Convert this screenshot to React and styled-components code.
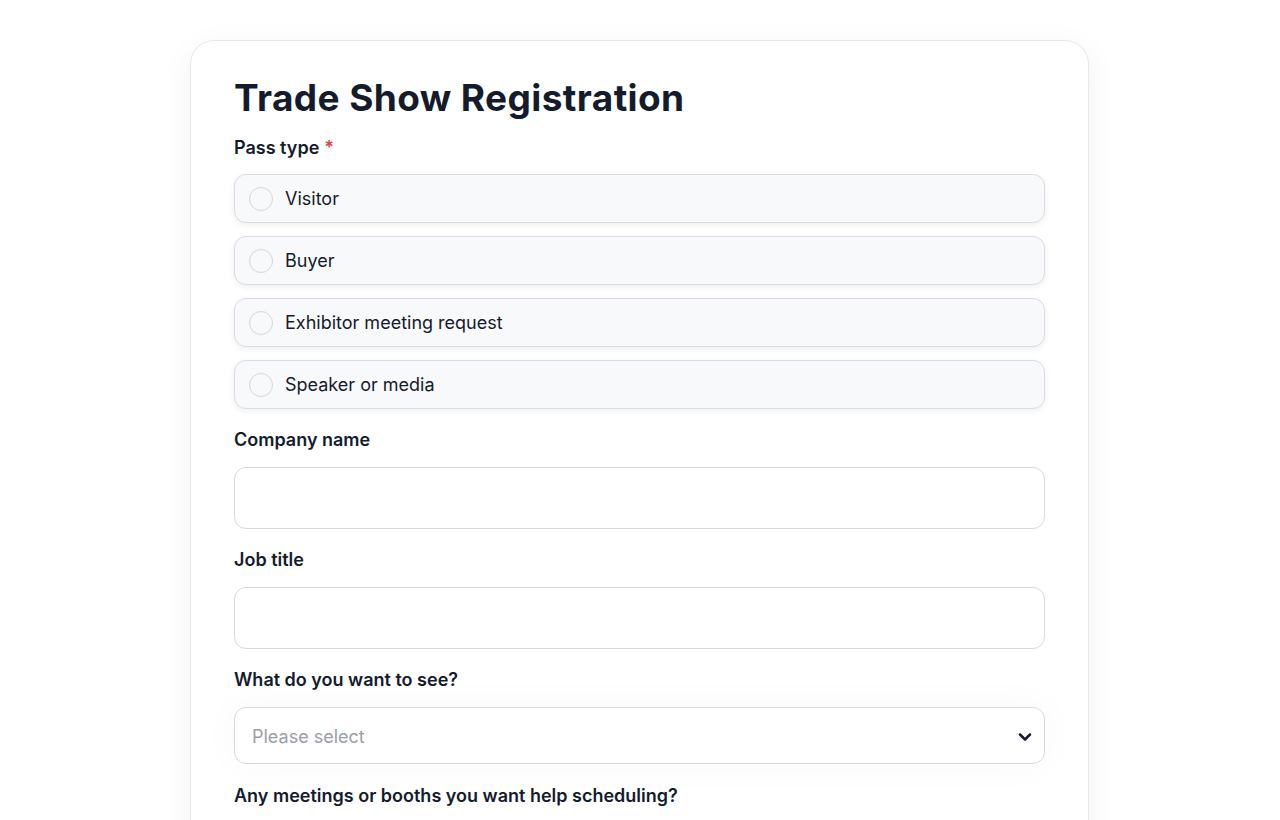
import React from 'react';
import styled, { createGlobalStyle } from 'styled-components';
import { ChevronDown } from 'lucide-react';

const GlobalStyle = createGlobalStyle`
  html, body {
    margin: 0;
    padding: 0;
    background: #ffffff;
    font-family: Inter, "Noto Sans", sans-serif;
    color: #141b2d;
  }
  * { box-sizing: border-box; }
`;

const Page = styled.main`
  display: flex;
  justify-content: center;
  align-items: flex-start;
  padding: 40px 1px 0 0;
  height: 820px;
  overflow: hidden;
`;

const Card = styled.form`
  width: 899px;
  background: #fff;
  border: 1px solid #e6e8ec;
  border-radius: 24px;
  box-shadow: 0 8px 32px rgba(17, 24, 39, 0.06);
  padding: 30px 43px 120px;
  display: flex;
  flex-direction: column;
`;

const Title = styled.h1`
  margin: 0 0 12px;
  font-size: 37px;
  line-height: 54px;
  font-weight: 700;
  letter-spacing: 0.4px;
  color: #141b2d;
`;

const Field = styled.div`
  display: flex;
  flex-direction: column;
  margin-bottom: ${p => p.$space || 20}px;
`;

const Label = styled.label`
  font-size: 18px;
  line-height: 22px;
  font-weight: 600;
  color: #141b2d;
  margin-bottom: ${p => p.$gap || 16}px;
`;

const Required = styled.span`
  color: #e0414b;
  margin-left: 5px;
`;

const Options = styled.div`
  display: flex;
  flex-direction: column;
  gap: 13px;
`;

const Option = styled.label`
  display: flex;
  align-items: center;
  gap: 12px;
  height: 49px;
  padding: 0 14px;
  background: #f8f9fb;
  border: 1px solid #d9dce3;
  border-radius: 12px;
  box-shadow: 0 2px 6px rgba(17, 24, 39, 0.07);
  font-size: 18px;
  color: #141b2d;
  cursor: pointer;
`;

const Radio = styled.span`
  width: 24px;
  height: 24px;
  border-radius: 50%;
  border: 1px solid #d3d6dc;
  background: #f8f9fb;
  flex-shrink: 0;
`;

const TextInput = styled.input`
  height: 62px;
  width: 100%;
  border: 1px solid #d6d9df;
  border-radius: 12px;
  background: #fff;
  padding: 0 17px;
  font: inherit;
  font-size: 18px;
  outline: none;
`;

const SelectBox = styled.div`
  height: 57px;
  display: flex;
  align-items: center;
  justify-content: space-between;
  padding: 2px 9px 0 17px;
  border: 1px solid #d6d9df;
  border-radius: 12px;
  background: #fff;
  box-shadow: 0 0 40px rgba(17, 24, 39, 0.03);
`;

const Placeholder = styled.span`
  font-size: 18px;
  color: #9a9ea7;
`;

const passTypes = ['Visitor', 'Buyer', 'Exhibitor meeting request', 'Speaker or media'];

export default function App() {
  return (
    <>
      <GlobalStyle />
      <Page>
        <Card onSubmit={e => e.preventDefault()}>
          <Title>Trade Show Registration</Title>

          <Field>
            <Label $gap={15}>
              Pass type<Required>*</Required>
            </Label>
            <Options>
              {passTypes.map(t => (
                <Option key={t}>
                  <Radio />
                  {t}
                </Option>
              ))}
            </Options>
          </Field>

          <Field>
            <Label $gap={16}>Company name</Label>
            <TextInput type="text" />
          </Field>

          <Field>
            <Label>Job title</Label>
            <TextInput type="text" />
          </Field>

          <Field $space={21}>
            <Label $gap={16}>What do you want to see?</Label>
            <SelectBox>
              <Placeholder>Please select</Placeholder>
              <ChevronDown size={20} strokeWidth={3} color="#141b2d" />
            </SelectBox>
          </Field>

          <Field>
            <Label>Any meetings or booths you want help scheduling?</Label>
            <TextInput type="text" />
          </Field>
        </Card>
      </Page>
    </>
  );
}
